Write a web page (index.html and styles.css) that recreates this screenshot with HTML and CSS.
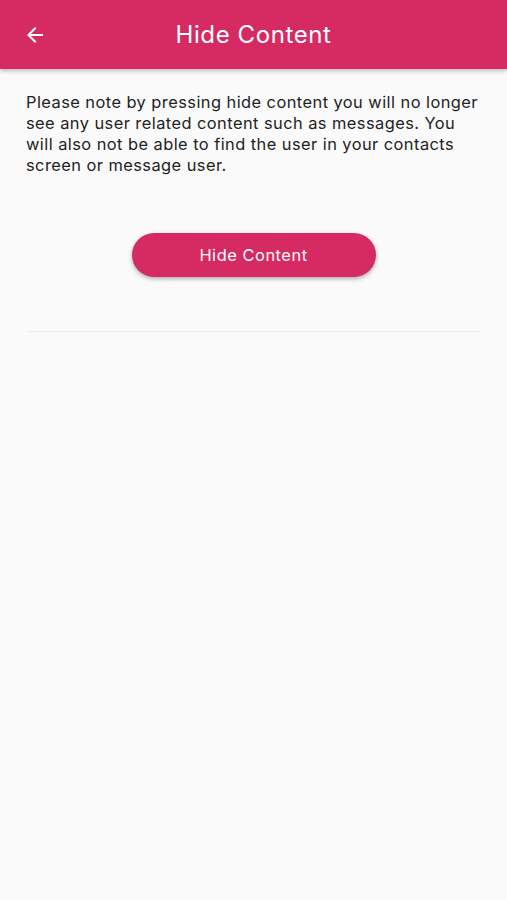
FILE: index.html
```html
<!DOCTYPE html>
<html>
<head>
<meta charset="utf-8">
<link rel="stylesheet" href="styles.css">
</head>
<body>
<header class="appbar">
  <button class="back" aria-label="Back">
    <svg width="24" height="24" viewBox="0 0 24 24"><path d="M20 11H7.83l5.59-5.59L12 4l-8 8 8 8 1.41-1.41L7.83 13H20v-2z" fill="#fff"/></svg>
  </button>
  <h1 class="title">Hide Content</h1>
</header>
<main class="content">
  <p class="note">Please note by pressing hide content you will no longer see any user related content such as messages. You will also not be able to find the user in your contacts screen or message user.</p>
  <div class="actions">
    <button class="hide-btn">Hide Content</button>
  </div>
  <hr class="divider">
</main>
</body>
</html>
```
FILE: styles.css
```css
html, body {
  margin: 0;
  padding: 0;
  background: #fafafa;
  font-family: Inter, "Noto Sans", sans-serif;
}
.appbar {
  height: 69px;
  background: #d62a62;
  display: flex;
  align-items: center;
  position: relative;
  box-shadow: 0 2px 4px rgba(0,0,0,0.25);
}
.back {
  background: none;
  border: 0;
  padding: 0;
  margin-left: 23px;
  width: 24px;
  height: 24px;
  display: flex;
}
.title {
  position: absolute;
  left: 0;
  right: 0;
  text-align: center;
  margin: 0;
  color: #fff;
  font-weight: 400;
  font-size: 24px;
  letter-spacing: 0.6px;
  pointer-events: none;
}
.content {
  padding: 0 26px;
}
.note {
  margin: 23px 0 0;
  font-size: 16.4px;
  line-height: 21px;
  color: #222;
  letter-spacing: 0.45px;
}
.actions {
  display: flex;
  justify-content: center;
  margin-top: 57px;
}
.hide-btn {
  width: 244px;
  height: 44px;
  border: 0;
  border-radius: 22px;
  background: #d62a62;
  color: #fff;
  font-family: Inter, "Noto Sans", sans-serif;
  font-size: 16.4px;
  letter-spacing: 0.55px;
  box-shadow: 0 2px 4px rgba(0,0,0,0.3);
}
.divider {
  margin: 54px 2px 0;
  border: 0;
  height: 1px;
  background: #ececec;
}
```
